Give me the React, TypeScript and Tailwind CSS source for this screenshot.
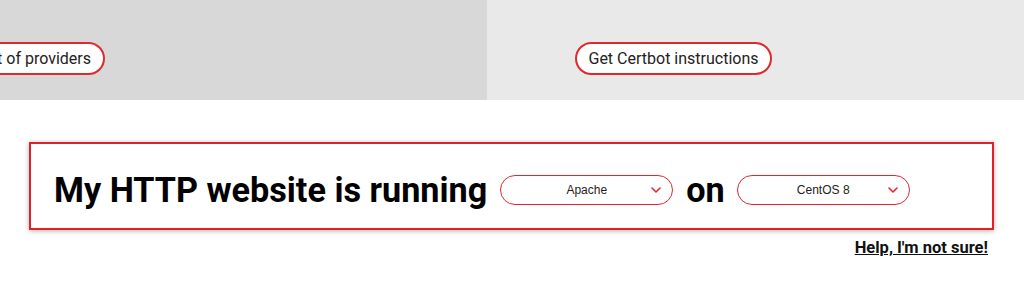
import React from 'react';

function Chevron() {
  return (
    <svg viewBox="0 0 10 6" className="absolute right-[11px] top-1/2 h-[6px] w-[10px] -translate-y-1/2" fill="none">
      <path d="M1 1l4 4 4-4" stroke="#e0282e" strokeWidth="1.6" strokeLinecap="round" strokeLinejoin="round" />
    </svg>
  );
}

function Select({ value }: { value: string }) {
  return (
    <div className="relative flex h-[30px] w-[173px] shrink-0 items-center justify-center rounded-full border-[1.5px] border-[#e0282e] bg-white text-[12px] text-[#222] [font-family:'Liberation_Sans',Arial,sans-serif]">
      {value}
      <Chevron />
    </div>
  );
}

export default function App() {
  return (
    <div className="min-h-[306px] bg-white [font-family:Roboto,'Liberation_Sans',sans-serif]">
      {/* Top panels */}
      <div className="flex h-[100px]">
        <div className="w-[487px] overflow-hidden bg-[#d8d8d8] pt-[42px]">
          <div className="flex w-[105px] justify-end">
            <button className="flex h-[33px] shrink-0 items-center whitespace-nowrap rounded-full border-2 border-[#e0282e] bg-white pl-[14px] pr-[12px] text-[16px] text-[#222]">
              See the full list of providers
            </button>
          </div>
        </div>
        <div className="flex-1 bg-[#e9e9e9] pl-[88px] pt-[42px]">
          <button className="flex h-[33px] w-[197px] items-center justify-center whitespace-nowrap rounded-full border-2 border-[#e0282e] bg-white text-[16px] text-[#222]">
            Get Certbot instructions
          </button>
        </div>
      </div>

      {/* Selector box */}
      <div className="ml-[29px] mt-[42px] flex h-[88px] w-[965px] items-center border-2 border-[#e0202a] bg-white pl-[23px] pt-[8px] shadow-[0_1px_5px_rgba(0,0,0,0.3)]">
        <h1 className="whitespace-nowrap text-[34.2px] font-bold leading-[40px] text-black">My HTTP website is running</h1>
        <div className="ml-[13px]">
          <Select value="Apache" />
        </div>
        <span className="ml-[13px] mr-[12px] text-[34.2px] font-bold leading-[40px] text-black">on</span>
        <Select value="CentOS 8" />
      </div>

      <div className="flex justify-end pr-[36px] pt-[6px]">
        <a href="#" className="text-[16.5px] font-bold text-[#111] underline">
          Help, I'm not sure!
        </a>
      </div>
    </div>
  );
}
